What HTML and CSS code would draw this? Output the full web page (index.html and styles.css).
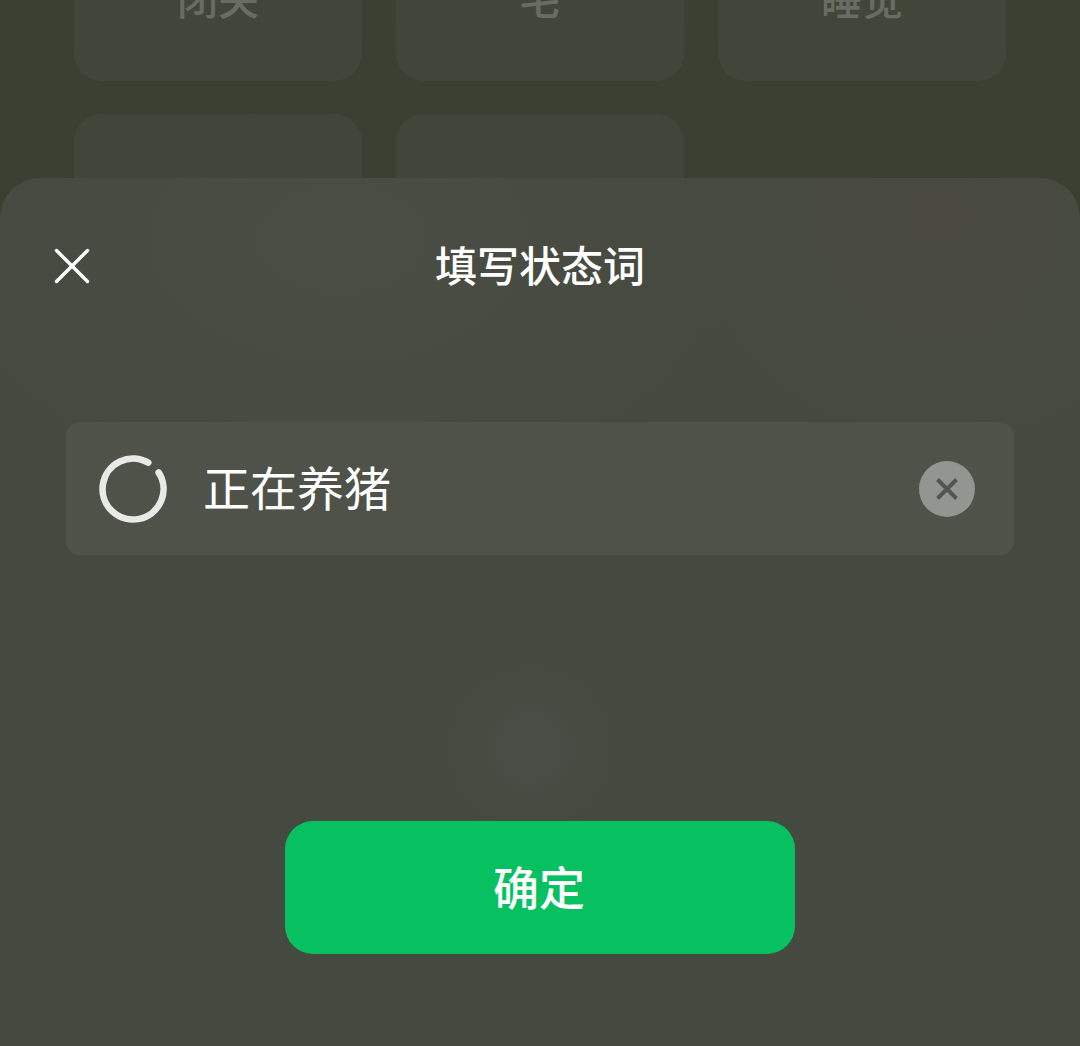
FILE: index.html
```html
<!DOCTYPE html>
<html lang="zh-CN">
<head>
<meta charset="utf-8">
<title>填写状态词</title>
<link rel="stylesheet" href="styles.css">
</head>
<body>
<div class="screen">
  <div class="tiles">
    <div class="tile">闭关</div>
    <div class="tile">宅</div>
    <div class="tile">睡觉</div>
    <div class="tile"></div>
    <div class="tile"></div>
  </div>
  <section class="sheet">
    <header class="sheet-head">
      <button class="close" aria-label="关闭">
        <svg width="36" height="36" viewBox="0 0 36 36"><path d="M2.5 2.5 L33.5 33.5 M33.5 2.5 L2.5 33.5"/></svg>
      </button>
      <h1 class="title">填写状态词</h1>
    </header>
    <div class="field">
      <svg class="spinner" width="68" height="68" viewBox="0 0 68 68"><path d="M59.6 17.4 A30.5 30.5 0 1 1 49.25 7.6"/></svg>
      <span class="value">正在养猪</span>
      <span class="clear">
        <svg width="24" height="24" viewBox="0 0 24 24"><path d="M2.5 2.5 L21.5 21.5 M21.5 2.5 L2.5 21.5"/></svg>
      </span>
    </div>
    <button class="confirm">确定</button>
  </section>
</div>
</body>
</html>
```
FILE: styles.css
```css
* { box-sizing: border-box; }
html, body { margin: 0; height: 100%; }
body { font-family: "Noto Sans CJK SC", "Noto Sans", sans-serif; background: #3b3f31; }

.screen {
  position: relative;
  width: 100%;
  height: 100vh;
  overflow: hidden;
  background: linear-gradient(180deg, #3c4033 0%, #383d2f 100%);
}

.tiles {
  display: grid;
  grid-template-columns: repeat(3, 288px);
  grid-auto-rows: 162px;
  gap: 33px 34px;
  justify-content: center;
  margin-top: -81px;
}
.tile {
  display: flex;
  align-items: center;
  justify-content: center;
  padding-bottom: 6px;
  background: #41463b;
  border-radius: 28px;
  color: #696c63;
  font-size: 41px;
  font-weight: 500;
}

.sheet {
  position: absolute;
  left: 0;
  right: 0;
  top: 178px;
  bottom: 0;
  display: flex;
  flex-direction: column;
  align-items: center;
  padding: 58px 66px 92px;
  border-radius: 40px 40px 0 0;
  background:
    radial-gradient(ellipse 420px 280px at 340px 60px, #4a4d44 0%, rgba(74, 77, 68, 0) 100%),
    radial-gradient(ellipse 260px 240px at 940px 40px, #4a4a41 0%, rgba(74, 74, 65, 0) 100%),
    radial-gradient(circle 90px at 530px 570px, #494e47 0%, rgba(73, 78, 71, 0) 100%),
    #454a40;
}

.sheet-head {
  position: relative;
  width: 100%;
  height: 60px;
  display: flex;
  align-items: center;
  justify-content: center;
}
.close {
  position: absolute;
  left: -12px;
  top: 12px;
  width: 36px;
  height: 36px;
  padding: 0;
  border: 0;
  background: none;
  display: flex;
}
.close path { stroke: #fff; stroke-width: 3.4; stroke-linecap: round; fill: none; }
.title {
  margin: 0;
  padding-bottom: 4px;
  color: #fff;
  font-size: 42px;
  font-weight: 500;
  line-height: 56px;
}

.field {
  width: 100%;
  height: 133px;
  margin-top: 126px;
  padding: 0 39px 0 33px;
  display: flex;
  align-items: center;
  border-radius: 14px;
  background: #4e5249;
}
.spinner { flex: none; }
.spinner path { stroke: #e9e9e7; stroke-width: 6.6; stroke-linecap: round; fill: none; }
.value {
  flex: 1;
  margin-left: 36px;
  padding-bottom: 6px;
  color: #fff;
  font-size: 47px;
  line-height: 1;
}
.clear {
  flex: none;
  width: 56px;
  height: 56px;
  border-radius: 50%;
  background: #929590;
  display: flex;
  align-items: center;
  justify-content: center;
}
.clear path { stroke: #53564e; stroke-width: 4; fill: none; }

.confirm {
  width: 510px;
  height: 133px;
  margin-top: auto;
  padding: 0 2px 5px 0;
  border: 0;
  border-radius: 28px;
  background: #07c160;
  color: #fff;
  font-family: inherit;
  font-size: 46px;
  font-weight: 500;
}
```
